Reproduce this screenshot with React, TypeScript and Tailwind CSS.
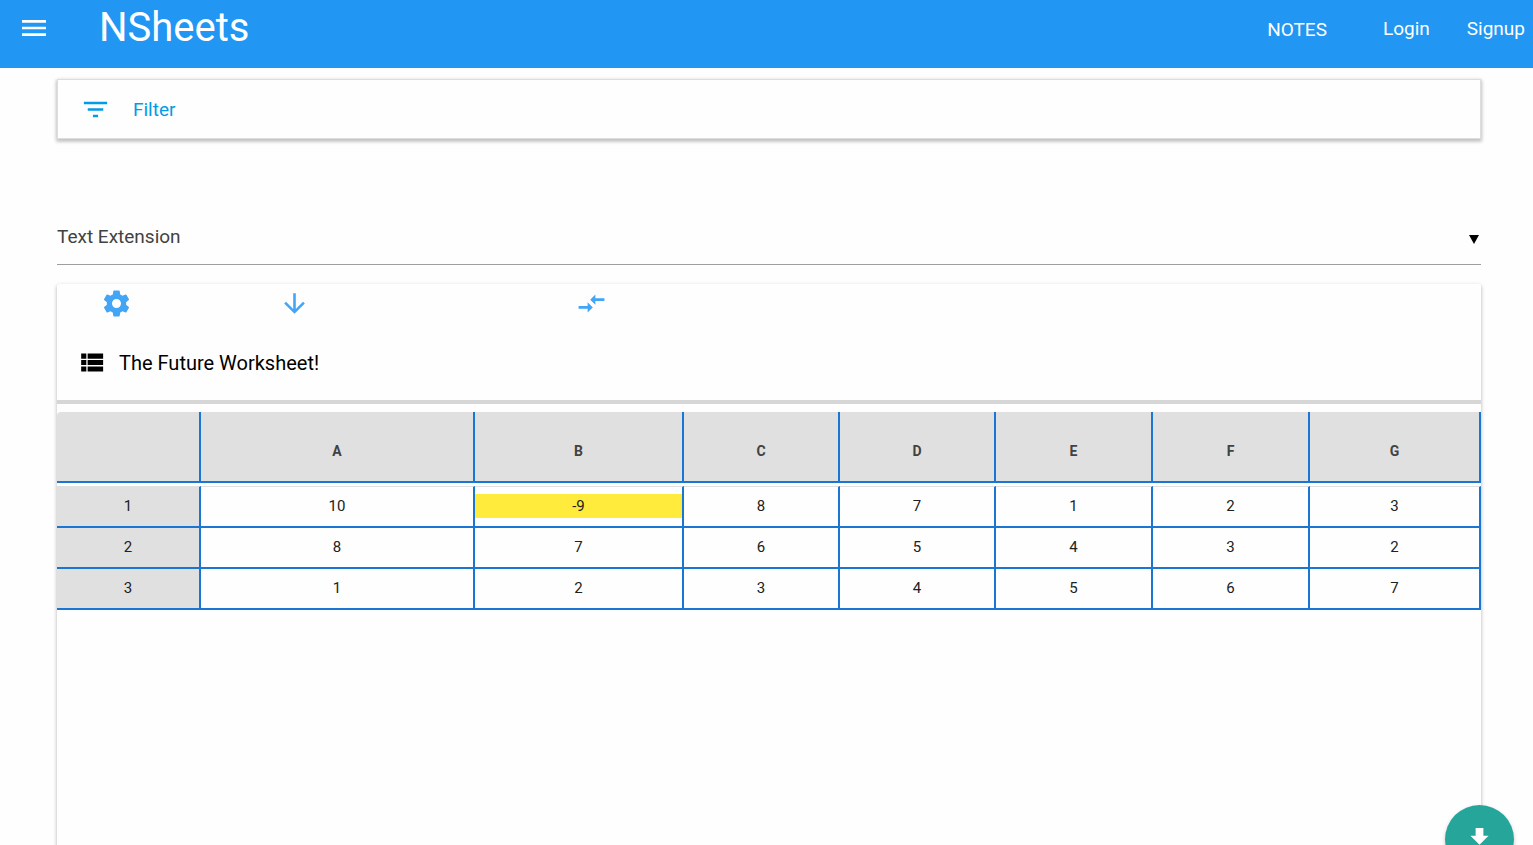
import type { ReactNode } from 'react';

function Icon({ path, className = '' }: { path: string; className?: string }) {
  return (
    <svg viewBox="0 0 24 24" fill="currentColor" aria-hidden="true" className={`shrink-0 ${className}`}>
      <path d={path} />
    </svg>
  );
}

const icons = {
  menu: 'M3 18h18v-2H3v2zm0-5h18v-2H3v2zm0-7v2h18V6H3z',
  filter: 'M10 18h4v-2h-4v2zM3 6v2h18V6H3zm3 7h12v-2H6v2z',
  settings:
    'M19.43 12.98c.04-.32.07-.64.07-.98s-.03-.66-.07-.98l2.11-1.65c.19-.15.24-.42.12-.64l-2-3.46c-.12-.22-.39-.3-.61-.22l-2.49 1c-.52-.4-1.08-.73-1.69-.98l-.38-2.65C14.46 2.18 14.25 2 14 2h-4c-.25 0-.46.18-.49.42l-.38 2.65c-.61.25-1.17.59-1.69.98l-2.49-1c-.23-.09-.49 0-.61.22l-2 3.46c-.13.22-.07.49.12.64l2.11 1.65c-.04.32-.07.65-.07.98s.03.66.07.98l-2.11 1.65c-.19.15-.24.42-.12.64l2 3.46c.12.22.39.3.61.22l2.49-1c.52.4 1.08.73 1.69.98l.38 2.65c.03.24.24.42.49.42h4c.25 0 .46-.18.49-.42l.38-2.65c.61-.25 1.17-.59 1.69-.98l2.49 1c.23.09.49 0 .61-.22l2-3.46c.12-.22.07-.49-.12-.64l-2.11-1.65zM12 15.5c-1.93 0-3.5-1.57-3.5-3.5s1.57-3.5 3.5-3.5 3.5 1.57 3.5 3.5-1.57 3.5-3.5 3.5z',
  down: 'M20 12l-1.41-1.41L13 16.17V4h-2v12.17l-5.58-5.59L4 12l8 8 8-8z',
  compare: 'M9.01 14H2v2h7.01v3L13 15l-3.99-4v3zm5.98-1v-3H22V8h-7.01V5L11 9l3.99 4z',
  list: 'M4 14h4v-4H4v4zm0 5h4v-4H4v4zM4 9h4V5H4v4zm5 5h12v-4H9v4zm0 5h12v-4H9v4zM9 5v4h12V5H9z',
  download: 'M19 9h-4V3H9v6H5l7 7 7-7zM5 18v2h14v-2H5z',
};

const columns = [
  { name: 'A', width: 'w-[274px]' },
  { name: 'B', width: 'w-[209px]' },
  { name: 'C', width: 'w-[156px]' },
  { name: 'D', width: 'w-[156px]' },
  { name: 'E', width: 'w-[157px]' },
  { name: 'F', width: 'w-[157px]' },
  { name: 'G', width: 'w-[171px]' },
];

const rows = [
  [10, -9, 8, 7, 1, 2, 3],
  [8, 7, 6, 5, 4, 3, 2],
  [1, 2, 3, 4, 5, 6, 7],
];

function ToolButton({ label, children }: { label: string; children: ReactNode }) {
  return (
    <button type="button" aria-label={label} className="text-[#42a5f5]">
      {children}
    </button>
  );
}

function Sheet() {
  return (
    <table className="w-full table-fixed border-separate border-spacing-0 text-center text-[15px] leading-6 text-[#212121]">
      <colgroup>
        <col className="w-[144px]" />
        {columns.map((c) => (
          <col key={c.name} className={c.width} />
        ))}
      </colgroup>
      <thead>
        <tr className="text-sm text-[#424242]">
          <td className="h-[71px] rounded-tl-sm border-r-2 border-b-2 border-[#1976d2] bg-[#e0e0e0]" />
          {columns.map((c) => (
            <th
              key={c.name}
              scope="col"
              className="h-[71px] border-r-2 border-b-2 border-[#1976d2] bg-[#e0e0e0] px-0 pt-2 font-bold"
            >
              {c.name}
            </th>
          ))}
        </tr>
      </thead>
      <tbody className="before:block before:h-[3px] before:content-['']">
        {rows.map((row, r) => {
          const top = r === 0 ? 'border-t border-t-[#e0e0e0]' : '';
          return (
            <tr key={r}>
              <th
                scope="row"
                className={`border-r-2 border-b-2 border-r-[#1976d2] border-b-[#1976d2] bg-[#e0e0e0] px-0 pt-[7px] pb-2 font-normal ${top}`}
              >
                {r + 1}
              </th>
              {row.map((value, c) => (
                <td
                  key={c}
                  className={`border-r-2 border-b-2 border-r-[#1976d2] border-b-[#1976d2] px-0 pt-[7px] pb-2 ${top}`}
                >
                  <div className={value < 0 ? 'bg-[#ffeb3b]' : ''}>{value}</div>
                </td>
              ))}
            </tr>
          );
        })}
      </tbody>
    </table>
  );
}

export default function App() {
  return (
    <div className="flex h-screen flex-col overflow-hidden bg-[#fefefe] font-[Roboto,sans-serif]">
      <header className="flex h-[68px] shrink-0 items-start bg-[#2196f3] pr-2 pl-[18px] text-white">
        <button type="button" aria-label="Open menu" className="mt-3">
          <Icon path={icons.menu} className="size-8" />
        </button>
        <a href="#home" className="ml-[49px] text-[40px] leading-[56px]">
          NSheets
        </a>
        <nav className="ml-auto flex text-[19px] leading-[58px]">
          <a href="#notes" className="mr-14 leading-[60px]">
            NOTES
          </a>
          <a href="#login" className="mr-[37px]">
            Login
          </a>
          <a href="#signup">Signup</a>
        </nav>
      </header>

      <main className="mx-[57px] mr-[52px] flex flex-1 flex-col">
        <button
          type="button"
          className="mt-[11px] flex h-[60px] shrink-0 items-center gap-[22px] border border-[#dddddd] pl-[22px] text-[19px] text-[#039be5] shadow-[0_2px_3px_1px_rgba(0,0,0,0.18),0_1px_5px_0_rgba(0,0,0,0.1)]"
        >
          <Icon path={icons.filter} className="size-[31px]" />
          <span className="pt-0.5">Filter</span>
        </button>

        <div className="relative mt-[70px] border-b border-[#9e9e9e] text-[#424242]">
          <select
            aria-label="Extension"
            className="block h-[55px] w-full appearance-none bg-transparent pt-0.5 text-[19px] outline-none"
          >
            <option>Text Extension</option>
          </select>
          <svg
            viewBox="0 0 10 9"
            aria-hidden="true"
            className="pointer-events-none absolute top-[26px] right-0.5 h-[9px] w-2.5 fill-black"
          >
            <path d="M0 0h10L5 9z" />
          </svg>
        </div>

        <section className="mt-[19px] -mb-4 flex-1 rounded-xs shadow-[0_2px_3px_1px_rgba(0,0,0,0.13),0_1px_5px_0_rgba(0,0,0,0.1)]">
          <div className="grid grid-cols-12 pt-1">
            <div className="col-span-1 flex justify-center">
              <ToolButton label="Settings">
                <Icon path={icons.settings} className="size-[31px]" />
              </ToolButton>
            </div>
            <div className="col-span-2 flex justify-center">
              <ToolButton label="Sort down">
                <Icon path={icons.down} className="size-[31px]" />
              </ToolButton>
            </div>
            <div className="col-span-3 flex justify-center">
              <ToolButton label="Compare">
                <Icon path={icons.compare} className="size-[31px]" />
              </ToolButton>
            </div>
          </div>
          <h1 className="mb-2 flex h-[85px] items-center gap-3 border-b-4 border-[#d6d6d6] pt-1.5 pl-[19px] text-xl text-black">
            <Icon path={icons.list} className="size-[31px]" />
            The Future Worksheet!
          </h1>
          <Sheet />
        </section>
      </main>

      <button
        type="button"
        aria-label="Download"
        className="fixed right-[19px] -bottom-[29px] flex size-[69px] items-center justify-center rounded-full bg-[#26a69a] text-white shadow-[0_2px_4px_0_rgba(0,0,0,0.2)]"
      >
        <Icon path={icons.download} className="size-[31px]" />
      </button>
    </div>
  );
}
